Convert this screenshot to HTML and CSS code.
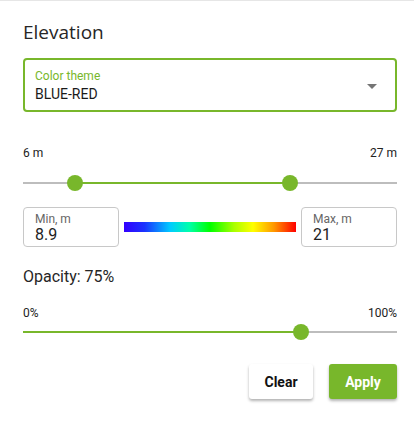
FILE: index.html
```html
<!DOCTYPE html>
<html>
<head>
<meta charset="utf-8">
<link rel="stylesheet" href="styles.css">
</head>
<body>
<div class="panel">
  <h2 class="title">Elevation</h2>
  <div class="select">
    <div class="select-text">
      <div class="select-label">Color theme</div>
      <div class="select-value">BLUE-RED</div>
    </div>
    <svg class="caret" width="10" height="5" viewBox="0 0 10 5"><path d="M0 0L10 0L5 5Z" fill="#757575"/></svg>
  </div>

  <div class="range-labels range-labels-elev">
    <span>6 m</span><span>27 m</span>
  </div>
  <div class="slider slider-elev">
    <div class="track"></div>
    <div class="fill" style="left:13.8%;width:57.6%"></div>
    <div class="thumb" style="left:13.8%"></div>
    <div class="thumb" style="left:71.4%"></div>
  </div>

  <div class="minmax">
    <div class="field">
      <div class="field-label">Min, m</div>
      <div class="field-value">8.9</div>
    </div>
    <div class="gradient"></div>
    <div class="field">
      <div class="field-label">Max, m</div>
      <div class="field-value">21</div>
    </div>
  </div>

  <div class="opacity-label">Opacity: 75%</div>
  <div class="range-labels range-labels-op">
    <span>0%</span><span>100%</span>
  </div>
  <div class="slider slider-op">
    <div class="track"></div>
    <div class="fill" style="left:0;width:74.3%"></div>
    <div class="thumb" style="left:74.3%"></div>
  </div>

  <div class="actions">
    <button class="btn btn-clear">Clear</button>
    <button class="btn btn-apply">Apply</button>
  </div>
</div>
</body>
</html>
```
FILE: styles.css
```css
* { box-sizing: border-box; }
html, body { margin: 0; padding: 0; background: #fff; }
body {
  font-family: Roboto, "Liberation Sans", sans-serif;
  color: #222;
  width: 414px;
  height: 422px;
  overflow: hidden;
  border-top: 1px solid #e6e6e6;
}
.panel {
  padding: 19px 17px 0 23px;
  display: flex;
  flex-direction: column;
}
.title {
  margin: 0;
  font-family: "Open Sans", sans-serif;
  font-weight: 500;
  font-size: 19px;
  line-height: 24px;
  color: #262626;
}
.select {
  margin-top: 14px;
  height: 54px;
  border: 2px solid #78b72b;
  border-radius: 4px;
  display: flex;
  align-items: center;
  padding: 0 18px 0 10px;
}
.select-text { flex: 1; }
.select-label {
  font-size: 12px;
  line-height: 14px;
  color: #78b72b;
  margin-top: 1px;
}
.select-value {
  font-size: 14px;
  line-height: 17px;
  color: #1a1a1a;
  margin-top: 3px;
}
.caret { display: block; margin-top: 2px; }
.range-labels {
  display: flex;
  justify-content: space-between;
  font-size: 12px;
  line-height: 14px;
  color: #222;
}
.range-labels-elev { margin-top: 34px; }
.slider {
  position: relative;
  height: 16px;
}
.slider-elev { margin-top: 15px; }
.slider-op { margin-top: 4px; }
.track {
  position: absolute;
  left: 0; right: 0; top: 7px;
  height: 2px;
  background: #bdbdbd;
}
.fill {
  position: absolute;
  top: 7px;
  height: 2px;
  background: #78b72b;
}
.thumb {
  position: absolute;
  top: 0;
  width: 16px;
  height: 16px;
  margin-left: -8px;
  border-radius: 50%;
  background: #78b72b;
}
.minmax {
  margin-top: 16px;
  display: flex;
  align-items: center;
  gap: 5px;
}
.field {
  width: 96px;
  height: 40px;
  border: 1px solid #c8c8c8;
  border-radius: 4px;
  padding: 4px 0 0 11px;
}
.field-label {
  font-size: 12px;
  line-height: 14px;
  color: #666;
}
.field-value {
  font-size: 16px;
  line-height: 18px;
  color: #222;
}
.gradient {
  flex: 1;
  height: 10px;
  background: linear-gradient(to right, #3300ff 0%, #1a33ff 12%, #00ccff 27%, #00ffaa 38%, #00ff00 50%, #aaff00 64%, #ffff00 75%, #ff9900 87%, #ff0000 100%);
}
.opacity-label {
  margin-top: 21px;
  font-size: 16px;
  line-height: 18px;
  color: #262626;
}
.range-labels-op { margin-top: 20px; }
.actions {
  margin-top: 24px;
  display: flex;
  justify-content: flex-end;
  gap: 16px;
}
.btn {
  height: 35px;
  border: none;
  border-radius: 3px;
  font-family: Roboto, "Liberation Sans", sans-serif;
  font-weight: 700;
  font-size: 14px;
  box-shadow: 0 2px 3px rgba(0,0,0,0.3);
  padding: 0;
}
.btn-clear { width: 64px; background: #fff; color: #111; }
.btn-apply { width: 68px; background: #78b72b; color: #fff; }
```
